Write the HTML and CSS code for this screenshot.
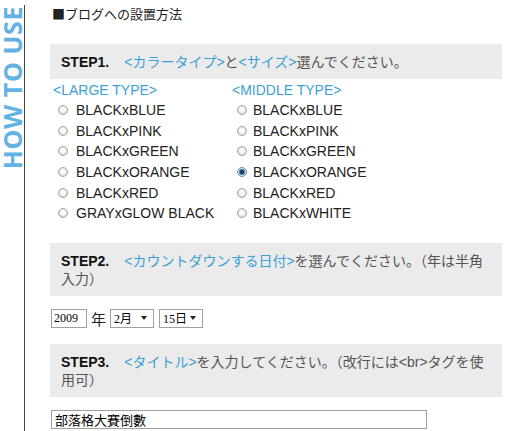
FILE: index.html
```html
<!DOCTYPE html>
<html lang="ja">
<head>
<meta charset="utf-8">
<title>HOW TO USE</title>
<link rel="stylesheet" href="styles.css">
</head>
<body>
<div class="page">
  <aside class="side"><span class="side-title">HOW TO USE</span></aside>
  <main class="main">
    <h2 class="title">■ブログへの設置方法</h2>

    <div class="step"><span class="step-no">STEP1.</span><span class="hl">&lt;カラータイプ&gt;</span>と<span class="hl">&lt;サイズ&gt;</span>選んでください。</div>

    <div class="types">
      <div class="type-col">
        <div class="type-head">&lt;LARGE TYPE&gt;</div>
        <label class="opt"><input type="radio" name="type" class="radio">BLACKxBLUE</label>
        <label class="opt"><input type="radio" name="type" class="radio">BLACKxPINK</label>
        <label class="opt"><input type="radio" name="type" class="radio">BLACKxGREEN</label>
        <label class="opt"><input type="radio" name="type" class="radio">BLACKxORANGE</label>
        <label class="opt"><input type="radio" name="type" class="radio">BLACKxRED</label>
        <label class="opt"><input type="radio" name="type" class="radio">GRAYxGLOW BLACK</label>
      </div>
      <div class="type-col type-col-right">
        <div class="type-head">&lt;MIDDLE TYPE&gt;</div>
        <label class="opt"><input type="radio" name="type" class="radio">BLACKxBLUE</label>
        <label class="opt"><input type="radio" name="type" class="radio">BLACKxPINK</label>
        <label class="opt"><input type="radio" name="type" class="radio">BLACKxGREEN</label>
        <label class="opt"><input type="radio" name="type" class="radio" checked>BLACKxORANGE</label>
        <label class="opt"><input type="radio" name="type" class="radio">BLACKxRED</label>
        <label class="opt"><input type="radio" name="type" class="radio">BLACKxWHITE</label>
      </div>
    </div>

    <div class="step step-gap"><span class="step-no">STEP2.</span><span class="hl">&lt;カウントダウンする日付&gt;</span>を選んでください。（年は半角入力）</div>

    <div class="date-row">
      <input class="year" type="text" value="2009">
      <span class="nen">年</span>
      <span class="sel sel-month">2月<span class="arrow"></span></span>
      <span class="sel sel-day">15日<span class="arrow"></span></span>
    </div>

    <div class="step step-gap2"><span class="step-no">STEP3.</span><span class="hl">&lt;タイトル&gt;</span>を入力してください。（改行には&lt;br&gt;タグを使用可）</div>

    <input class="title-input" type="text" value="部落格大賽倒數">
  </main>
</div>
</body>
</html>
```

FILE: styles.css
```css
* { box-sizing: border-box; }

body {
  margin: 0;
  background: #fff;
  font-family: "Liberation Sans", "Noto Sans CJK JP", sans-serif;
  color: #222;
}

.page {
  display: grid;
  grid-template-columns: 25px 452px;
  column-gap: 25px;
  min-height: 431px;
}

.side {
  margin-top: 5px;
  border-right: 1px solid #444;
  display: flex;
  justify-content: center;
  align-items: flex-start;
  padding-top: 1px;
}

.side-title {
  writing-mode: vertical-rl;
  transform: rotate(180deg);
  font-family: "Open Sans", sans-serif;
  font-weight: 700;
  font-size: 25px;
  line-height: 24px;
  letter-spacing: 0.6px;
  color: #62b2e4;
  white-space: nowrap;
}

.main {
  padding-top: 5px;
}

.title {
  margin: 0 0 21px 2px;
  font-family: "Noto Sans CJK JP", sans-serif;
  font-size: 13px;
  font-weight: normal;
  line-height: 18px;
  color: #222;
}

.step {
  background: #ebebeb;
  padding: 9px 12px 8px 11px;
  font-size: 14px;
  line-height: 18px;
  color: #555;
}

.step-no {
  font-weight: 700;
  color: #111;
  margin-right: 15px;
}

.hl { color: #3d9fd6; }

.types {
  display: grid;
  grid-template-columns: 179px 1fr;
  margin: 1px 0 0 3px;
}

.type-col {
  display: flex;
  flex-direction: column;
}

.type-head {
  color: #3d9fd6;
  font-size: 14px;
  line-height: 20px;
}

.opt {
  display: flex;
  align-items: center;
  gap: 8px;
  height: 20.6px;
  padding-left: 5px;
  font-size: 14px;
  color: #222;
}

.type-col-right .opt { gap: 6px; }

.radio {
  appearance: none;
  -webkit-appearance: none;
  margin: 0;
  width: 10px;
  height: 10px;
  border-radius: 50%;
  border: 1px solid #a6a6a6;
  background: radial-gradient(circle at 50% 45%, #fafafa 0 2px, #dcdcdc 4px);
  flex: none;
}

.radio:checked {
  border-color: #6f8fb0;
  background: radial-gradient(circle, #1c3a60 0 1.8px, #5f8db9 2.4px 3px, #dfe9f3 3.6px);
}

.step-gap { margin-top: 19px; }

.date-row {
  display: flex;
  align-items: center;
  margin: 13px 0 0 1px;
  height: 19px;
}

.year {
  width: 36px;
  height: 19px;
  margin: 0;
  padding: 0 2px;
  border: 1px solid #a0a0a0;
  font-family: "Liberation Serif", "Noto Sans CJK JP", serif;
  font-size: 12px;
  color: #000;
}

.nen {
  margin: 0 4px 0 4px;
  font-size: 15px;
  color: #222;
}

.sel {
  display: flex;
  align-items: center;
  justify-content: space-between;
  width: 44px;
  height: 19px;
  padding: 0 6px 0 3px;
  border: 1px solid #a0a0a0;
  font-family: "Liberation Serif", "Noto Sans CJK JP", serif;
  font-size: 12px;
  color: #000;
}

.sel-day { margin-left: 5px; }

.arrow {
  width: 0;
  height: 0;
  border-left: 3px solid transparent;
  border-right: 3px solid transparent;
  border-top: 4px solid #222;
}

.step-gap2 { margin-top: 16px; }

.title-input {
  display: block;
  margin: 13px 0 0 1px;
  width: 376px;
  height: 19px;
  padding: 0 3px;
  border: 1px solid #a0a0a0;
  font-family: "Noto Sans CJK JP", sans-serif;
  font-size: 13px;
  color: #000;
}
```
